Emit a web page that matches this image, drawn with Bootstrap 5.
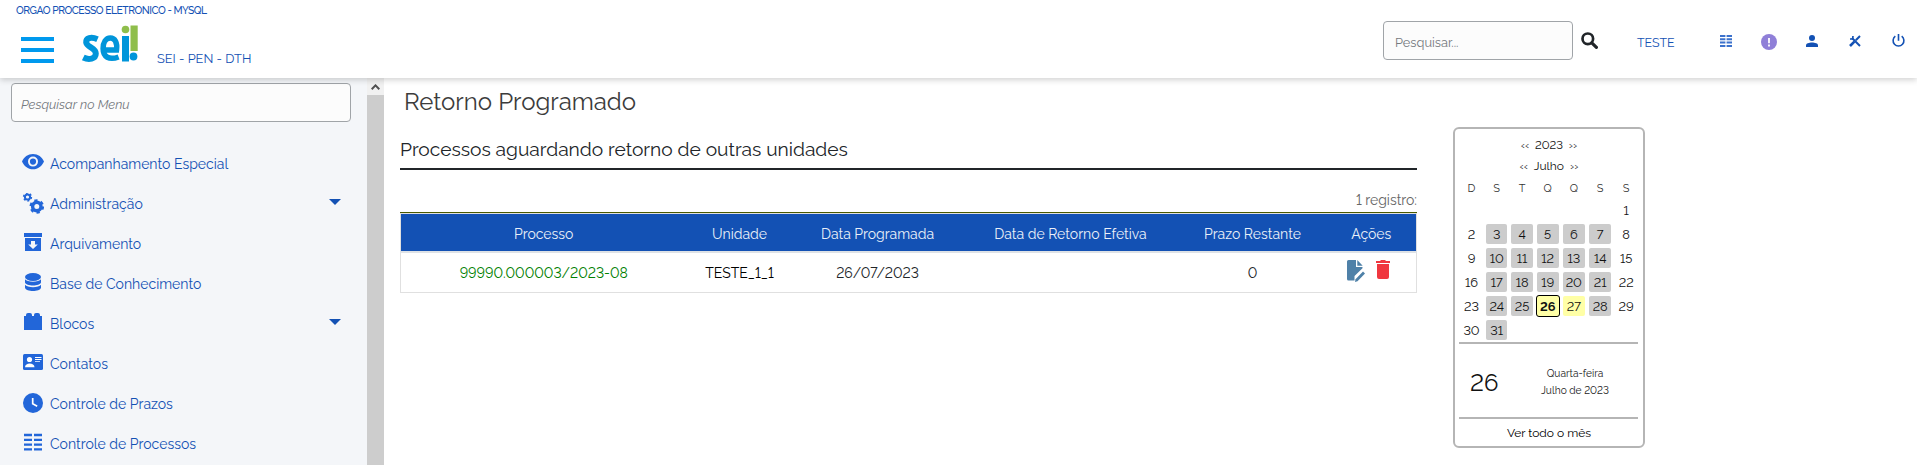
<!DOCTYPE html>
<html lang="pt-br">
<head>
<meta charset="utf-8">
<meta name="viewport" content="width=device-width, initial-scale=1">
<title>SEI - Retorno Programado</title>
<link rel="stylesheet" href="https://cdn.jsdelivr.net/npm/bootstrap@5.3.0/dist/css/bootstrap.min.css">
<style>
:root{--azul:#1351b4;--icone:#2266d9}
html,body{height:100%;overflow:hidden}
body{font-family:Raleway,Lato,"Open Sans",sans-serif;font-variant-numeric:lining-nums;font-weight:400;color:#212529;background:#fff}
a{text-decoration:none}
.topo{height:78px;flex:none;box-shadow:0 2px 6px rgba(0,0,0,.18);position:relative;z-index:2;color:var(--azul)}
.orgao{height:21px;padding:4px 0 0 16px;font-size:10.4px;line-height:13px;letter-spacing:-.5px;font-weight:500}
.linha{height:57px}
.hamb{width:33px;height:26px;margin:16px 28px 0 21px;border:0;background:none;padding:0}
.hamb i{display:block;height:4px;background:#0099ee}
.logo{width:56px;height:40px;margin:4px 18px 0 1px;overflow:visible}
.sistema{font-size:12.8px;line-height:16px;margin-top:30px}
.campo.form-control{height:39px;border:1px solid #a0a4a8;border-radius:4px;background:#fcfcfc;color:#6c757d;padding:3px 11px 0;font-size:12.8px}
.campo::placeholder{color:#75797e!important}
.busca.campo{width:190px;margin-right:8px}
.acoes-topo{padding-right:12px}
.teste{width:36px;font-size:12.4px;line-height:16px;margin:14px 47px 0 39px}
.lateral{width:367px;flex:none;background:#f4f6f9;padding:5px 16px 0 11px}
.lateral .campo{font-style:italic;padding:3px 9px 0}
.menu{margin-top:24px;padding:0 10px 0 11px}
.menu li{height:40px;padding-top:5px}
.menu a{color:var(--azul);font-size:14px;line-height:20px}
.menu a span{padding-top:3px}
.menu .ic{width:22px;height:22px;margin:1px 6px -1px 0;flex:none;fill:var(--icone)}
.barra{width:17px;flex:none;background:#cdcdcd}
.barra div{height:17px;background:#f1f1f1}
.conteudo{width:1017px;margin-left:16px;flex:none}
.titulo{font-size:24px;line-height:30px;margin:9px 0 0 4px;color:#3c3c3c;font-weight:400}
.sub{font-size:19.2px;line-height:24px;font-weight:400;margin:15px 0 0;padding:5px 0 0;height:38px;border-bottom:2px solid #212529}
.registro{font-size:14px;line-height:20px;height:42px;padding-top:20px;text-align:right;color:#666}
.lista{table-layout:fixed;border-collapse:collapse;width:1016px;border:1px solid #e0e0e0;text-align:center;font-size:14px}
.caixa-lista{border-top:1px solid #4a5a00}
.lista th{background:var(--azul);color:#eaf0f8;font-weight:400;height:38px;padding:4px 0 0;border-bottom:2px solid #dee2e6}
.lista td{height:41px;padding:2px 0 0}
.cal{width:192px;height:321px;border:2px solid #b5b5b5;border-radius:6px;margin:49px 0 0 36px;flex:none;padding:5px 4px 0;color:#111}
.cab{font-size:12px;line-height:22px;height:22px;text-align:center}
.cab.ano{font-size:11.5px}
.cab+.cab{height:21px;line-height:21px}
.cab span{font-size:12px;color:#222}
.dias{display:grid;grid-template-columns:25px 25.4px 25.4px 25.8px 26.4px 26.4px 25.6px;grid-template-rows:23px;grid-auto-rows:24px;font-size:12.8px;text-align:center;line-height:21px}
.dias>*{height:20px;margin:0 2px}
.dias .sem{height:20px;font-size:11px;color:#333;line-height:23px}
.dias .util{background:#ccc;border-radius:2px}
.dias .am{background:#ffffa6;border-radius:2px}
.dias .hoje{background:#ffffa6;border:1px solid #000;border-radius:3px;font-weight:700;margin:-1px 1px 0;height:22px}
.resumo{border-top:2px solid #b5b5b5;border-bottom:2px solid #b5b5b5;height:77px;width:179px;margin-top:-2px}
.resumo .dia{font-size:24px;width:76px;padding:4px 0 0 11px;line-height:30px}
.resumo .desc{font-size:10.2px;line-height:17px;width:80px;text-align:center;color:#222;padding-top:2px}
.mes{font-size:12px;line-height:24px;padding-top:2px;color:#000}
</style>
</head>
<body class="d-flex flex-column">
<header class="topo bg-white">
  <div class="orgao">ORGAO PROCESSO ELETRONICO - MYSQL</div>
  <div class="linha d-flex align-items-start">
    <button class="hamb d-flex flex-column justify-content-between" aria-label="Menu"><i class="w-100"></i><i class="w-100"></i><i class="w-100"></i></button>
    <svg class="logo" viewBox="0 0 56 40"><g fill="none" stroke="#0095da" stroke-width="6"><path d="M14.500 14.200C8 11.300 2.800 13 3.200 17.500 4 22.500 12.800 22.500 12.800 28.500c0 5.500-7 6.800-12.500 4"/><path d="M20.500 25H33.500C34.500 17.500 32 13 27.300 13c-4.500 0-7.200 4.500-7.200 10.500 0 8.500 6 12 15.500 8.500" stroke-width="5.500"/></g><rect x="39" y="11" width="7" height="25.500" fill="#0095da"/><circle cx="42.500" cy="4.500" r="3.800" fill="#8fbe4b"/><rect x="47.500" y="0.500" width="7.200" height="25.500" fill="#8fbe4b"/><circle cx="50.500" cy="31.500" r="3.900" fill="#0095da"/></svg>
    <div class="sistema">SEI - PEN - DTH</div>
    <div class="acoes-topo d-flex align-items-start ms-auto">
      <input class="form-control campo busca" placeholder="Pesquisar...">
      <svg width="17" height="17" viewBox="0 0 17 17" style="margin-top:11px" fill="none" stroke="#212529"><circle cx="6.8" cy="6.8" r="5.3" stroke-width="2.7"/><path d="M10.8 10.8l4.6 4.6" stroke-width="3.2" stroke-linecap="round"/></svg>
      <div class="teste">TESTE</div>
      <svg width="12" height="12" viewBox="0 0 12 12" style="margin:14px 29px 0 0" stroke="#3b71cc" stroke-width="2"><path d="M0 1h5.400M6.600 1H12M0 4.300h5.400M6.600 4.300H12M0 7.600h5.400M6.600 7.600H12M0 10.900h5.400M6.600 10.900H12"/></svg>
      <svg width="16" height="16" viewBox="0 0 16 16" style="margin:13px 29px 0 0"><circle cx="8" cy="8" r="8" fill="#8f7fd8"/><path d="M8 4v5.200M8 10.600v2" stroke="#fff" stroke-width="1.800"/></svg>
      <svg width="12" height="12" viewBox="0 0 12 12" style="margin:14px 31px 0 0" fill="#1351b4"><circle cx="6" cy="3" r="3"/><path d="M0 12v-1.700C0 8.300 3 7.400 6 7.400s6 .9 6 2.900V12z"/></svg>
      <svg width="12" height="12" viewBox="0 0 12 12" style="margin:14px 31px 0 0" fill="none" stroke="#1351b4"><path d="M3 3l8 8" stroke-width="2"/><path d="M1 4h2.600L4 1" stroke-width="1.700"/><path d="M11 1L6.800 5.200" stroke-width="2"/><path d="M5.400 6.600L1 11" stroke-width="2.600"/></svg>
      <svg width="13" height="13" viewBox="0 0 13 13" style="margin-top:13px" fill="none" stroke="#1351b4" stroke-width="1.6"><path d="M6.500 0v6.800M3.300 2.200a5.400 5.400 0 1 0 6.400 0"/></svg>
    </div>
  </div>
</header>
<div class="d-flex flex-grow-1">
  <nav class="lateral">
    <input class="form-control campo" placeholder="Pesquisar no Menu">
    <ul class="menu list-unstyled mb-0">
      <li><a href="#" class="d-flex align-items-center"><svg class="ic" viewBox="0 0 22 22"><path fill-rule="evenodd" d="M11 1C6 1 1.800 4.100 0 8.500c1.800 4.400 6 7.800 11 7.800S20.200 12.900 22 8.500C20.200 4.100 16 1 11 1zm0 12.600a5 5 0 1 1 0-10 5 5 0 0 1 0 10zM11 5.500a3.100 3.100 0 1 0 0 6.200A3.100 3.100 0 0 0 11 5.500z"/></svg><span>Acompanhamento Especial</span></a></li>
      <li><a href="#" class="d-flex align-items-center"><svg class="ic" viewBox="0 0 22 22"><g fill="none" stroke="#2266d9"><circle cx="5.500" cy="4" r="2.600" stroke-width="2"/><circle cx="5.500" cy="4" r="3.900" stroke-width="1.500" stroke-dasharray="2 2.080"/><circle cx="14.800" cy="13.500" r="4.200" stroke-width="3.400"/><circle cx="14.800" cy="13.500" r="6.200" stroke-width="2.200" stroke-dasharray="3.200 3.293"/></g></svg><span>Administração</span><svg class="ms-auto" width="12" height="6" viewBox="0 0 12 6" fill="#1351b4" style="margin-top:-1px"><path d="M0 0h12L6 6z"/></svg></a></li>
      <li><a href="#" class="d-flex align-items-center"><svg class="ic" viewBox="0 0 22 22"><path fill-rule="evenodd" d="M2 0h18v4H2zM3 5h16v13H3zM9 8v3.500H6.200L11 16l4.800-4.500H13V8z"/></svg><span>Arquivamento</span></a></li>
      <li><a href="#" class="d-flex align-items-center"><svg class="ic" viewBox="0 0 22 22"><ellipse cx="11" cy="4" rx="8" ry="4"/><path d="M3 6.300c2 3.300 14 3.300 16 0v3.200c-1 4-15 4-16 0zM3 11.700c2 3.300 14 3.300 16 0v3c-1 4.400-15 4.400-16 0z"/></svg><span>Base de Conhecimento</span></a></li>
      <li><a href="#" class="d-flex align-items-center"><svg class="ic" viewBox="0 0 22 22"><path d="M2 3h2V2q0-2 2-2h2q2 0 2 2v1h2V2q0-2 2-2h2q2 0 2 2v1h2v14H2z"/></svg><span>Blocos</span><svg class="ms-auto" width="12" height="6" viewBox="0 0 12 6" fill="#1351b4" style="margin-top:-1px"><path d="M0 0h12L6 6z"/></svg></a></li>
      <li><a href="#" class="d-flex align-items-center"><svg class="ic" viewBox="0 0 22 22"><rect x="1" y="1" width="20" height="16" rx="1.500"/><g fill="#fff"><circle cx="7.500" cy="6.500" r="2.600"/><path d="M3 14.200c0-5 9.500-5 9.500 0z"/><path d="M13 4h6.500v1H13zM13 6h6.500v1H13zM13 8h5v.8h-5z"/></g></svg><span>Contatos</span></a></li>
      <li><a href="#" class="d-flex align-items-center"><svg class="ic" viewBox="0 0 22 22"><circle cx="11" cy="10" r="10"/><path d="M10.700 5v5.800l4.500 2.500" fill="none" stroke="#fff" stroke-width="1.700"/></svg><span>Controle de Prazos</span></a></li>
      <li><a href="#" class="d-flex align-items-center"><svg class="ic" viewBox="0 0 22 22"><path d="M2 2h8M12 2h8M2 6.800h8M12 6.800h8M2 11.600h8M12 11.600h8M2 16.400h8M12 16.400h8" stroke="#2266d9" stroke-width="2.300"/></svg><span>Controle de Processos</span></a></li>
    </ul>
  </nav>
  <div class="barra"><div class="d-flex justify-content-center align-items-center"><svg width="9" height="6" viewBox="0 0 9 6" fill="none" stroke="#505050" stroke-width="2"><path d="M.7 5.200L4.500 1.400l3.800 3.800"/></svg></div></div>
  <main class="conteudo">
    <h1 class="titulo">Retorno Programado</h1>
    <h2 class="sub">Processos aguardando retorno de outras unidades</h2>
    <div class="registro">1 registro:</div>
    <div class="caixa-lista">
    <table class="lista">
      <colgroup><col style="width:286px"><col style="width:106px"><col style="width:170px"><col style="width:216px"><col style="width:148px"><col style="width:90px"></colgroup>
      <thead><tr><th>Processo</th><th>Unidade</th><th>Data Programada</th><th>Data de Retorno Efetiva</th><th>Prazo Restante</th><th>Ações</th></tr></thead>
      <tbody><tr><td style="color:#008000">99990.000003/2023-08</td><td style="color:#000">TESTE_1_1</td><td>26/07/2023</td><td></td><td>0</td>
      <td><div class="d-flex justify-content-center align-items-start" style="gap:11px;margin:-4px 5px 0 0"><svg width="18" height="22" viewBox="0 0 18 22" fill="#4f81a8"><path d="M1.500 0H9v7h6.500v1.200L7.500 16v4.500h-6Q0 20.500 0 19V1.500Q0 0 1.500 0zM10.300 0l5.400 5.700h-5.400z"/><path d="M16 11.500l2 2-7.500 7.800-2.500.7.500-2.700z"/><path d="M8.300 17.800l8-7.800" stroke="#fff" stroke-width=".9"/></svg><svg width="14" height="19" viewBox="0 0 14 19" fill="#f0373f"><path d="M0 1h4l1-1h4l1 1h4v2H0zM1 4h12v13q0 2-2 2H3q-2 0-2-2z"/></svg></div></td></tr></tbody>
    </table>
    </div>
  </main>
  <aside class="cal">
    <div class="cab ano"><span>‹‹</span>&nbsp; 2023 &nbsp;<span>››</span></div>
    <div class="cab"><span>‹‹</span>&nbsp; Julho &nbsp;<span>››</span></div>
    <div class="dias">
      <div class="sem">D</div><div class="sem">S</div><div class="sem">T</div><div class="sem">Q</div><div class="sem">Q</div><div class="sem">S</div><div class="sem">S</div>
      <div></div><div></div><div></div><div></div><div></div><div></div><div>1</div>
      <div>2</div><div class="util">3</div><div class="util">4</div><div class="util">5</div><div class="util">6</div><div class="util">7</div><div>8</div>
      <div>9</div><div class="util">10</div><div class="util">11</div><div class="util">12</div><div class="util">13</div><div class="util">14</div><div>15</div>
      <div>16</div><div class="util">17</div><div class="util">18</div><div class="util">19</div><div class="util">20</div><div class="util">21</div><div>22</div>
      <div>23</div><div class="util">24</div><div class="util">25</div><div class="hoje">26</div><div class="am">27</div><div class="util">28</div><div>29</div>
      <div>30</div><div class="util">31</div>
    </div>
    <div class="resumo d-flex align-items-center"><div class="dia">26</div><div class="desc">Quarta-feira<br>Julho de 2023</div></div>
    <div class="mes text-center">Ver todo o mês</div>
  </aside>
</div>
<script src="https://cdn.jsdelivr.net/npm/bootstrap@5.3.0/dist/js/bootstrap.bundle.min.js"></script>
</body>
</html>
